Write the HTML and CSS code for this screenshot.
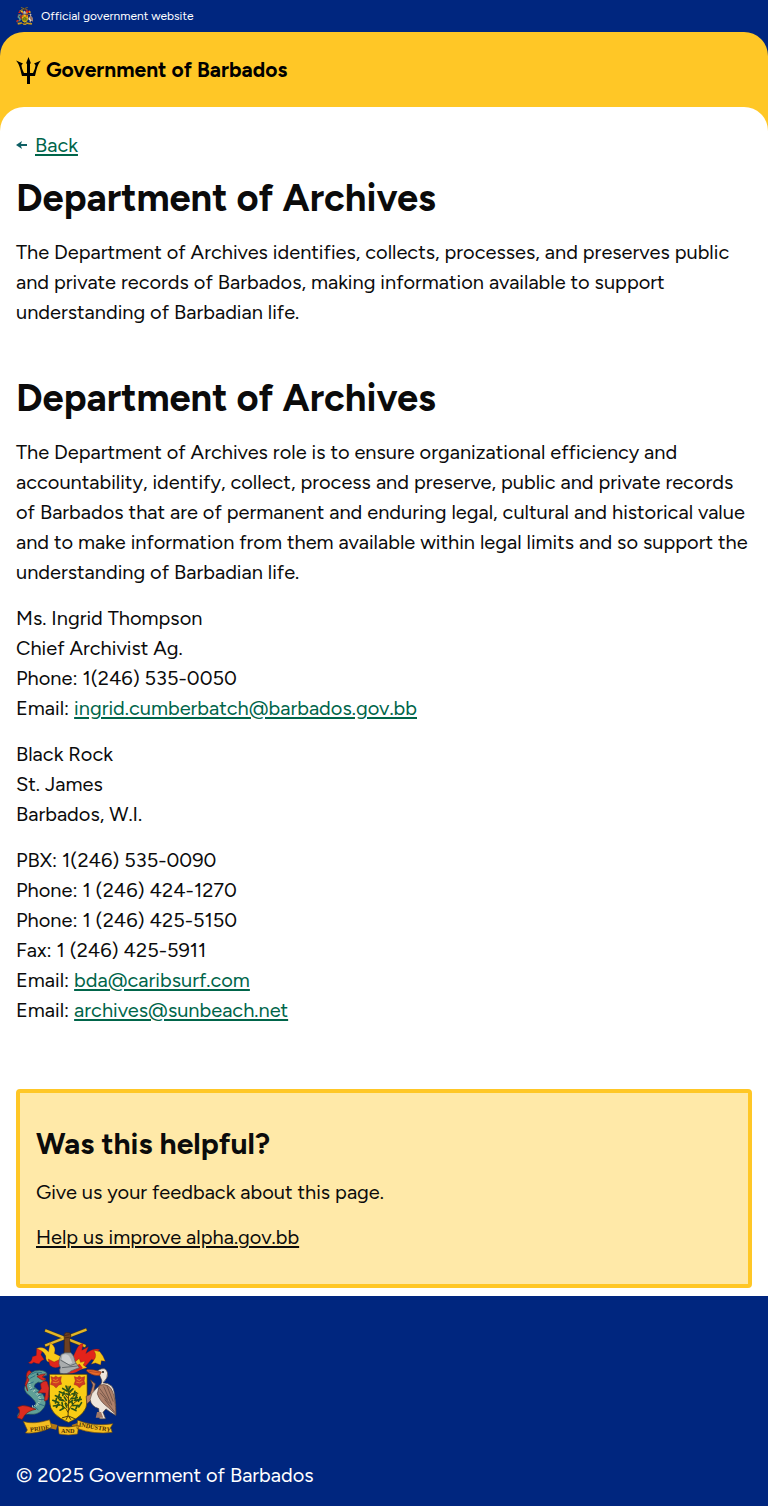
FILE: index.html
```html
<!DOCTYPE html>
<html lang="en">
<head>
<meta charset="utf-8">
<meta name="viewport" content="width=device-width, initial-scale=1">
<title>Department of Archives - Government of Barbados</title>
<link rel="stylesheet" href="styles.css">
</head>
<body>
<svg class="symbols" aria-hidden="true">
  <symbol id="crest" viewBox="18 24 303 327">
    <!-- crossed sugar canes held in a fist -->
    <path d="M104 31l124 49M104 78l127-50" stroke="#55430f" stroke-width="10"/>
    <path d="M105 31l122 48M105 77l125-48" stroke="#e2b62a" stroke-width="7"/>
    <path d="M163 58q-3-19 6-20l11 1q6 9-1 19l3 48h-20z" fill="#6d4022" stroke="#352012" stroke-width="2"/>
    <path d="M164 47l15-3M164 54l15-2" stroke="#352012" stroke-width="2"/>
    <!-- mantling -->
    <g stroke="#6f1a10" stroke-width="1">
      <path d="M79 85l18 6-5 14 10 14q-12 4-15 13-8 1-17-4-6 8-16 1 12-5 12-18l12-4z" fill="#e3231b"/>
      <path d="M79 86q20-9 36 10l5-28q20 14 13 33l21 10-4 28-22-9q-20-2-21-14 2-18-28-30z" fill="#f8c918"/>
      <path d="M114 118l18 9 22-10-2 22q-18 12-33-2z" fill="#df261d"/>
      <path d="M189 112l8-17q9-24 23-24l-4 20 20-10-8 20q25-18 42-12l-10 10q18 4 10 26l-25-6-18 21-37-5z" fill="#e3231b"/>
      <path d="M194 128l14-12 4 12 14-3-6 11 12 8-20 6-18-9z" fill="#f8c918"/>
      <path d="M252 92l18 3 10 14 7 16-12-2-2 13-16-6-13 4 9-14q10-13-1-28z" fill="#f3c517"/>
    </g>
    <path d="M146 150q10 12 31 12 22 0 42-17l-10-13-22 13z" fill="#d9291e"/>
    <path d="M148 118l5-14 12-5h18q10 9 13 28l12 17-25 10q-10 12-33 7-3-9 1-18-7-9-3-25z" fill="#a9adae" stroke="#51585e" stroke-width="2"/>
    <path d="M157 106q12-6 20 2 7 11 10 22l-12 4-20-14z" fill="#cdcfcf"/>
    <path d="M151 121l30 17 18-7M156 144l47-5" fill="none" stroke="#646a6e" stroke-width="3"/>
    <!-- shield -->
    <path d="M118 164h114v84q-1 38-56 62-57-23-58-63z" fill="#f9cc15" stroke="#3b2a0b" stroke-width="2"/>
    <g id="flower" fill="#cf3922" stroke="#8d2b17" stroke-width="1">
      <path d="M122 171l9 3 6-5 7 5 10-3-2 13 3 10-9 3-8 9-8-8-9-3 4-11z"/>
      <path d="M129 179l8 4 7-5M128 188l10 2 9-4" fill="none" stroke="#f0aa28" stroke-width="2"/>
    </g>
    <use href="#flower" x="71"/>
    <!-- bearded fig tree -->
    <path d="M174 291q3-34 0-92M174 280q-7-22-34-25M175 276q11-26 34-35M174 260q-8-20-36-28M175 251q9-21 30-29M174 237l-14-18M175 227l14-18M174 291l-18 5M175 290l20 9M174 290l-6 12M175 290l8 12" fill="none" stroke="#4c3b0b" stroke-width="3"/>
    <g fill="none" stroke="#2b5315" stroke-width="5" stroke-linecap="round">
      <path d="M168 200l5 12M181 201l-6 13M158 207l13 8M189 208l-12 10M148 217l15 6M162 218l-4 10M186 224l14-4M195 216l-3 12M136 229l17 6M148 224l-3 13M163 233l6 10M184 238l18-3M200 228l-4 12M168 223l12 4"/>
      <path d="M128 243l18 7M139 238l-3 13M130 260l18-3M145 254l-6 10M156 250l2 13M162 266l-12 7M186 248l3 11M194 243l20-3M211 233l-5 13M189 258l20 1M215 250l-8 13M185 268l13 6M160 244l-12-3M188 243l-10 7M203 258l-5 10M166 253l4 10"/>
    </g>
    <!-- dolphin -->
    <path d="M83 222l21 10 15-2-17 13-20 3zM48 176q-2-19 9-24l16 14z" fill="#d9261d" stroke="#6c1813" stroke-width="2"/>
    <path d="M48 181q10-29 39-29 26 1 23 15l-17 5 14 7q-7 13-23 9-13 5-12 15 17 10 27 24 18 27-6 48-12 12-34 10-18-2-38 10-1-14 13-22 20-7 34-9 13-8 5-19-12-14-25-24-12-17 0-25z" fill="#5f9f97" stroke="#264f50" stroke-width="2"/>
    <path d="M57 187q0 18 12 25 20 18 20 29-3 20-26 21" fill="none" stroke="#a9c8bb" stroke-width="7" stroke-dasharray="3 3"/>
    <path d="M60 165q17-12 35-6M58 177l17-9M54 194l16-7M60 211l16-5M73 220l14-6M82 230l17-5M86 241l19-1M84 253l17 6M71 261l13 11" stroke="#2e6f86" stroke-width="3" fill="none"/>
    <path d="M80 171q11-9 26-8l-10 9 11 6q-8 8-14 2zM51 173l-7 22 8 20-4-18 8-16zM91 193q12-13 20-6l6 19-4 35-10 4 3-24-23-1 10-12z" fill="#da2a24" stroke="#7b1c19" stroke-width="2"/>
    <path d="M21 264q15-9 32-3l24 9q-24 5-34 18l-8 13-15-5q9-11 7-23z" fill="#dc2c20" stroke="#6c1813" stroke-width="2"/>
    <circle cx="82" cy="164" r="3" fill="#182a35"/>
    <!-- pelican -->
    <path d="M242 181l15 12-10 47-16 14-2-23 12-6 8-28z" fill="#b8816a" stroke="#4b332a" stroke-width="2"/>
    <path d="M264 153q24-15 30 7 2 16-14 30 32 1 35 33 5 33 4 66-17-10-30-20l-9 10 8 20h-18l-3-31q-23-6-26-28 1-18 20-34 18-14 15-24z" fill="#eee6dc" stroke="#514037" stroke-width="2"/>
    <path d="M269 197q31-8 41 22 8 21 9 67l-23-21q-27-20-33-42z" fill="#ad806a" stroke="#5a3b30" stroke-width="2"/>
    <path d="M270 207l24 34M282 201l25 57M292 199l19 48M285 240l31 40M271 220l30 33" stroke="#76574a" stroke-width="3"/>
    <path d="M232 150q18-1 43 7l-5 10q-19 4-40-13z" fill="#e86a29" stroke="#812f19" stroke-width="2"/>
    <path d="M237 155l34 5" stroke="#a63a20" stroke-width="2"/>
    <circle cx="280" cy="157" r="3" fill="#201b16"/>
    <path d="M262 278h12l7 18h-23z" fill="#a07867"/>
    <!-- motto ribbon -->
    <path d="M115 311l27 7-4 14-24-6zM205 311l-20 7 9 15 19-10z" fill="#b47812"/>
    <path d="M39 307q31 10 79-5l7 22q-38 21-80 18l6-9zM144 321q34 7 62-2l-3 26q-28 6-56 0zM203 303q48 20 107 11l-7 11 5 15q-54 7-107-12z" fill="#f4bd21" stroke="#6d4b0d" stroke-width="2"/>
    <g class="motto">
      <text x="60" y="338" transform="rotate(-7 60 338)">PRIDE</text>
      <text x="153" y="342">AND</text>
      <text x="206" y="322" transform="rotate(10 206 322)">INDUSTRY</text>
    </g>
  </symbol>
</svg>

<div class="official">
  <svg class="official-crest" aria-hidden="true"><use href="#crest"/></svg>
  <span>Official government website</span>
</div>

<div class="header-back">
  <header class="header">
    <a class="brand" href="#">
      <svg class="trident" viewBox="0 0 25 27" aria-hidden="true"><path d="M12.500 0l2.500 6.500h-1V16h3c1.500-3 2.500-6 2.500-8L18 6.500l7-3C21 8 20.500 14 19 19h-5v8h-3v-8H6C4.500 14 4 8 0 3.500l7 3L5.500 8c0 2 1 5 2.500 8h3V6.500h-1z"/></svg>
      <span>Government of Barbados</span>
    </a>
  </header>
</div>

<div class="page-back">
  <main class="page">
    <a class="back" href="#">
      <svg class="arrow" viewBox="0 0 11 8" aria-hidden="true"><path d="M0 4l6-4-1 3h6v2H5l1 3z"/></svg>
      <span>Back</span>
    </a>
    <section class="intro">
      <h1>Department of Archives</h1>
      <p>The Department of Archives identifies, collects, processes, and preserves public and private records of Barbados, making information available to support understanding of Barbadian life.</p>
    </section>
    <section class="details">
      <h1>Department of Archives</h1>
      <p>The Department of Archives role is to ensure organizational efficiency and accountability, identify, collect, process and preserve, public and private records of Barbados that are of permanent and enduring legal, cultural and historical value and to make information from them available within legal limits and so support the understanding of Barbadian life.</p>
      <p>Ms. Ingrid Thompson<br>Chief Archivist Ag.<br>Phone: 1(246) 535-0050<br>Email: <a href="mailto:ingrid.cumberbatch@barbados.gov.bb">ingrid.cumberbatch@barbados.gov.bb</a></p>
      <p>Black Rock<br>St. James<br>Barbados, W.I.</p>
      <p>PBX: 1(246) 535-0090<br>Phone: 1 (246) 424-1270<br>Phone: 1 (246) 425-5150<br>Fax: 1 (246) 425-5911<br>Email: <a href="mailto:bda@caribsurf.com">bda@caribsurf.com</a><br>Email: <a href="mailto:archives@sunbeach.net">archives@sunbeach.net</a></p>
    </section>
    <aside class="feedback">
      <h2>Was this helpful?</h2>
      <p>Give us your feedback about this page.</p>
      <p><a href="#">Help us improve alpha.gov.bb</a></p>
    </aside>
  </main>
</div>

<footer class="footer">
  <svg class="footer-crest" role="img" aria-label="Coat of arms of Barbados"><use href="#crest"/></svg>
  <p>© 2025 Government of Barbados</p>
</footer>
</body>
</html>
```
FILE: styles.css
```css
* {
  box-sizing: border-box;
}

body {
  margin: 0;
  background: #fff;
  color: #0b0b0b;
  font: 20px/30px Figtree, Lato, sans-serif;
}

h1, h2, p {
  margin: 0;
}

a {
  color: #00654a;
  text-decoration-thickness: 2px;
  text-underline-offset: 2px;
}

.symbols {
  display: none;
}

.motto {
  fill: #4a2a06;
  font: bold 19px "Liberation Serif", serif;
}

.official {
  display: flex;
  align-items: center;
  gap: 8px;
  height: 32px;
  padding: 0 16px;
  background: #00267f;
  color: #fff;
  font-size: 12px;
}

.official-crest {
  width: 17px;
  height: 18px;
}

.header-back {
  background: #00267f;
}

.header {
  display: flex;
  padding: 23px 16px 22px;
  border-radius: 24px 24px 0 0;
  background: #ffc726;
}

.brand {
  display: flex;
  align-items: center;
  gap: 5px;
  color: #000;
  font-size: 21px;
  font-weight: 700;
  text-decoration: none;
}

.trident {
  width: 25px;
  height: 27px;
}

.page-back {
  background: #ffc726;
}

.page {
  display: flex;
  flex-direction: column;
  padding: 24px 16px 8px;
  border-radius: 24px 24px 0 0;
  background: #fff;
}

.back {
  display: flex;
  align-self: flex-start;
  align-items: center;
  gap: 8px;
  line-height: 28px;
  text-decoration: none;
}

.back span {
  text-decoration: underline 2px;
}

.arrow {
  width: 11px;
  height: 8px;
  fill: #0e5f64;
}

.intro,
.details {
  display: grid;
  gap: 16px;
}

.intro {
  margin: 16px 0 48px;
}

h1 {
  font-size: 38px;
  line-height: 46px;
}

.feedback {
  display: grid;
  gap: 15px;
  margin-top: 64px;
  padding: 32px 16px;
  border: 4px solid #ffc726;
  border-radius: 4px;
  background: #ffe9a8;
}

.feedback h2 {
  font-size: 30px;
  line-height: 37px;
}

.feedback a {
  color: inherit;
}

.footer {
  padding: 32px 16px 16px;
  background: #00267f;
  color: #fff;
}

.footer-crest {
  display: block;
  width: 101px;
  height: 108px;
  margin-bottom: 24px;
}
```
